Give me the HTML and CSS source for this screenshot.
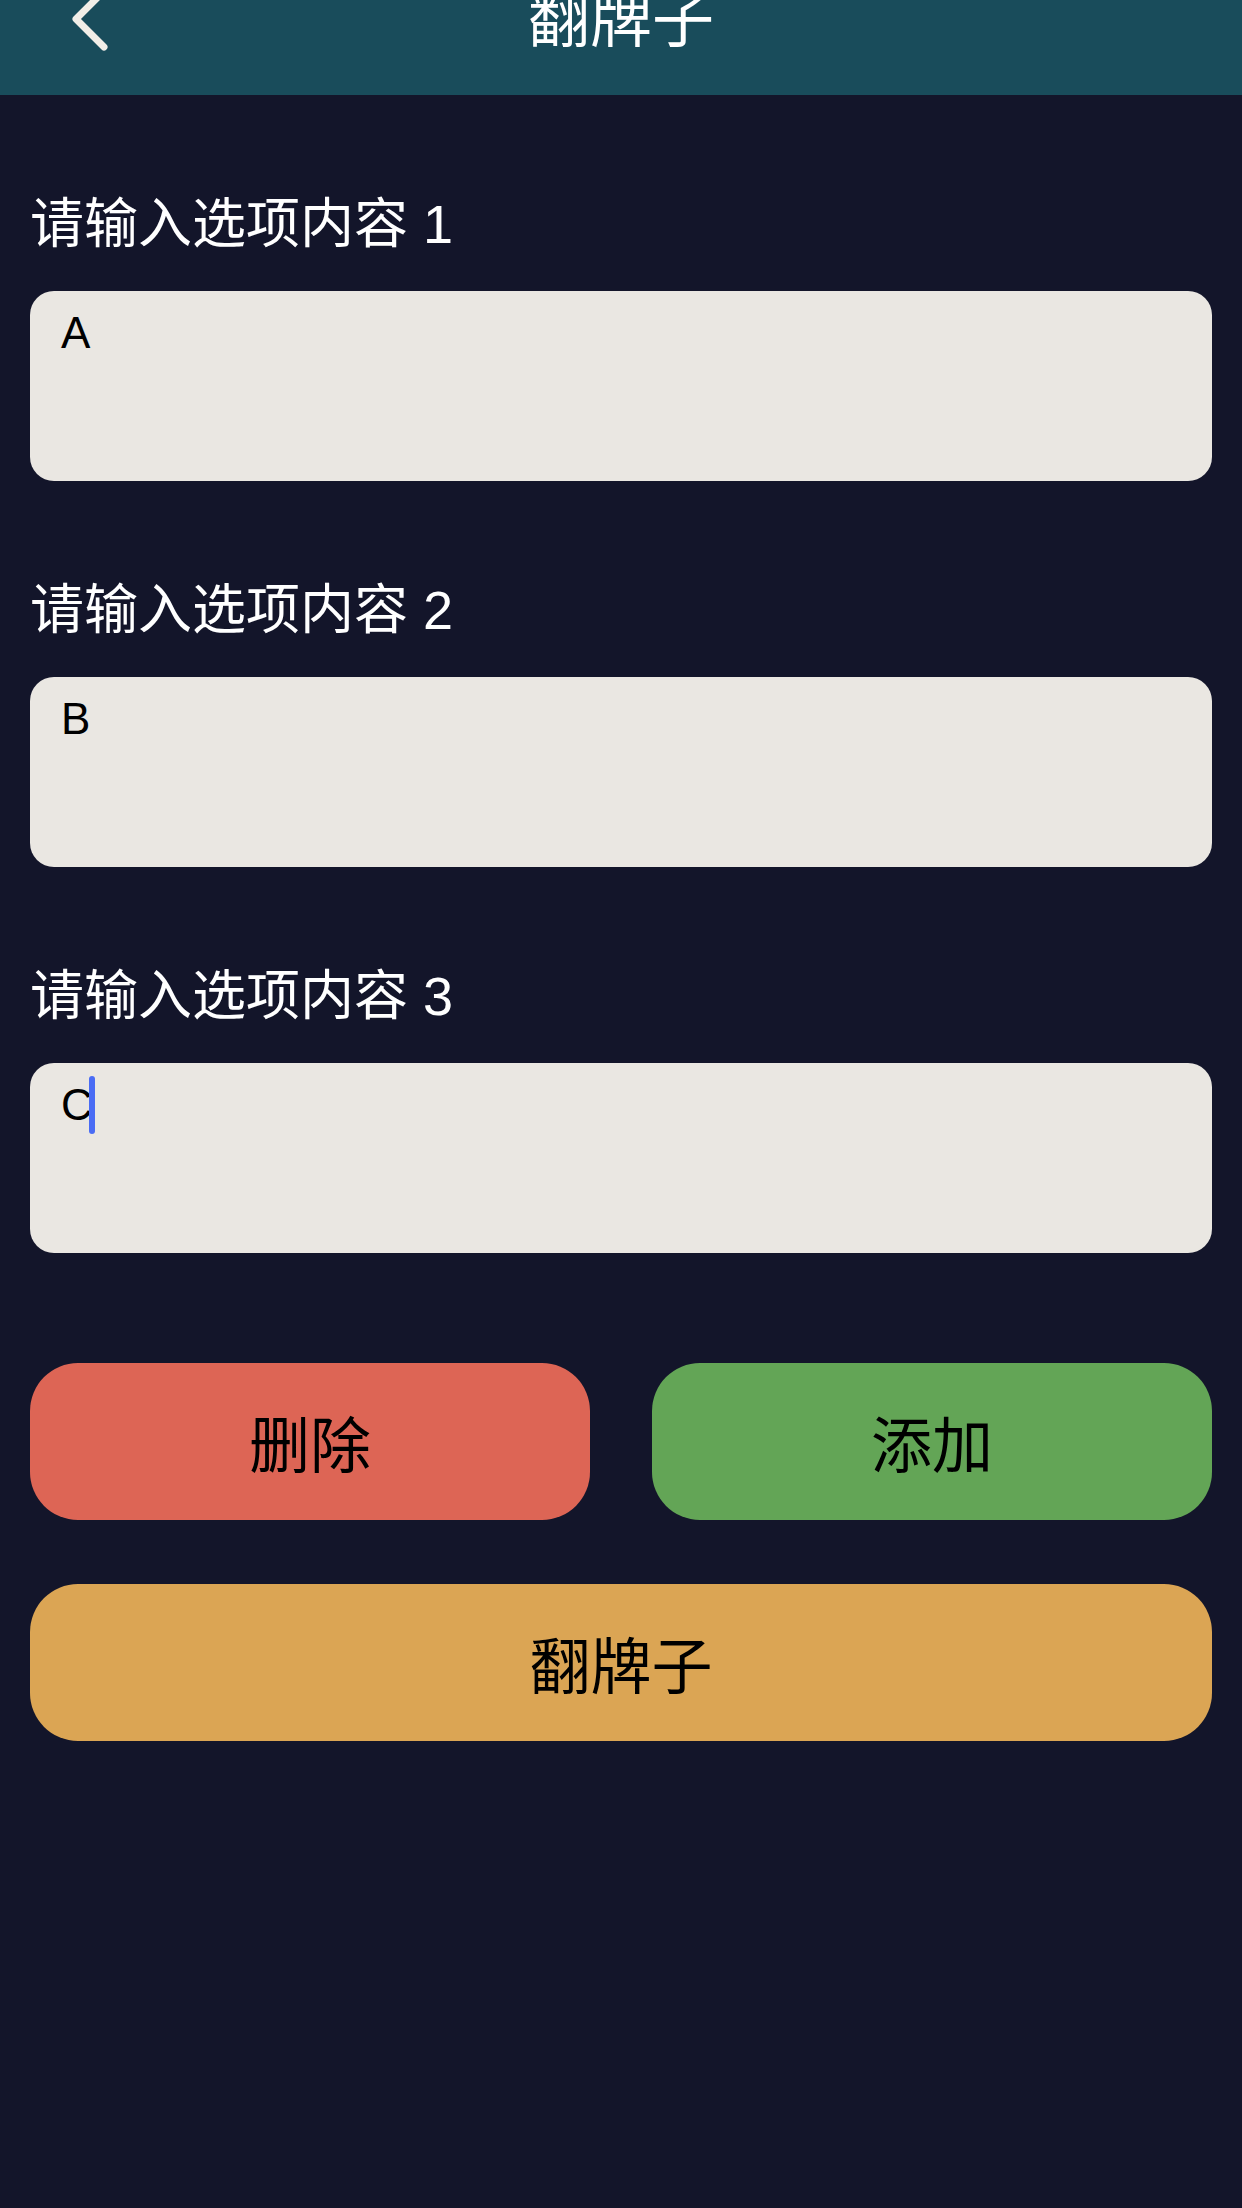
FILE: index.html
```html
<!DOCTYPE html>
<html lang="zh-CN">
<head>
  <meta charset="UTF-8">
  <meta name="viewport" content="width=device-width, initial-scale=1.0">
  <title>翻牌子</title>
  <link rel="stylesheet" href="styles.css">
</head>
<body>
  <header class="nav">
    <div class="nav-back">
      <svg width="130" height="95" viewBox="0 0 130 95">
        <path d="M104 -9 L76 19 L104 47" fill="none" stroke="#f1eee8" stroke-width="7" stroke-linecap="round" stroke-linejoin="round"/>
      </svg>
    </div>
    <h1 class="nav-title">翻牌子</h1>
    <div></div>
  </header>

  <main class="content">
    <div class="field">
      <p class="field-label">请输入选项内容 1</p>
      <div class="field-box">A</div>
    </div>
    <div class="field">
      <p class="field-label">请输入选项内容 2</p>
      <div class="field-box">B</div>
    </div>
    <div class="field">
      <p class="field-label">请输入选项内容 3</p>
      <div class="field-box">C<span class="caret"></span></div>
    </div>

    <div class="btn-row">
      <button class="btn btn-del">删除</button>
      <button class="btn btn-add">添加</button>
    </div>
    <button class="btn btn-flip">翻牌子</button>
  </main>
</body>
</html>
```

FILE: styles.css
```css
/* 全体 */
body { margin: 0; min-height: 2208px; background-color: #13152a; font-family: "Liberation Sans", "Noto Sans CJK SC", sans-serif; }

/* ナビゲーションバー */
.nav { display: grid; grid-template-columns: 1fr auto 1fr; height: 95px; background-color: #194c5b; overflow: hidden; }
.nav-back svg { display: block; }
.nav-title { margin: -9px 0 0; font-size: 62px; line-height: 60px; font-weight: normal; color: #fff; }

/* 入力欄 */
.content { padding: 0 30px; }
.field { padding-top: 97px; }
.field-label { margin: 0 0 35px; font-size: 54px; line-height: 64px; color: #fff; }
.field-box { box-sizing: border-box; height: 190px; padding: 13px 31px; font-size: 44px; line-height: 58px; color: #000; background-color: #eae7e2; border-radius: 24px; }
.caret { display: inline-block; vertical-align: top; width: 6px; height: 58px; margin-left: -4px; background-color: #4a6cf4; border-radius: 3px; }

/* ボタン */
.btn { display: block; width: 100%; height: 157px; padding: 0; border: none; border-radius: 48px; font-family: inherit; font-size: 61px; color: #000; }
.btn-row { display: flex; gap: 62px; margin-top: 110px; }
.btn-del { background-color: #dd6555; }
.btn-add { background-color: #63a556; }
.btn-flip { margin-top: 64px; background-color: #dba554; }
```
